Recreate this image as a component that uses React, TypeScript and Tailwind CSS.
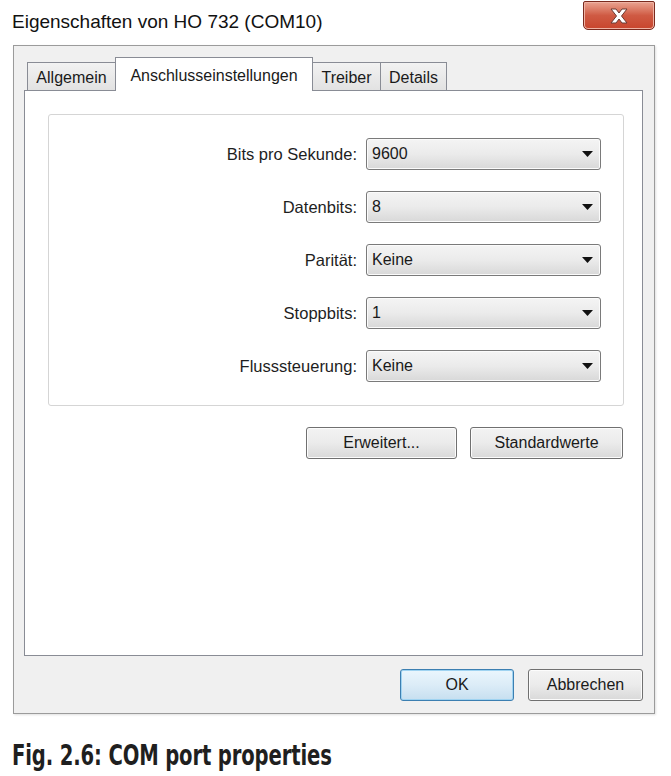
const rows = [
  { label: "Bits pro Sekunde:", value: "9600" },
  { label: "Datenbits:", value: "8" },
  { label: "Parität:", value: "Keine" },
  { label: "Stoppbits:", value: "1" },
  { label: "Flusssteuerung:", value: "Keine" },
];

const tabs = [
  { name: "Allgemein", width: "w-[89px]" },
  { name: "Anschlusseinstellungen", width: "w-[198px]", active: true },
  { name: "Treiber", width: "w-[69px]" },
  { name: "Details", width: "w-[67px]" },
];

function DropArrow() {
  return (
    <svg width="11" height="6" viewBox="0 0 11 6" className="shrink-0">
      <path d="M0 0 H11 L5.5 6 Z" fill="#111" />
    </svg>
  );
}

function Combo({ value }: { value: string }) {
  return (
    <div className="flex h-[32px] w-[235px] items-center justify-between rounded-[3px] border border-[#7a7a7a] bg-gradient-to-b from-[#f4f4f4] via-[#ebebeb] to-[#d8d8d8] pl-[5px] pr-[7px] shadow-[inset_0_0_0_1px_#fbfbfb]">
      <span className="text-[16px] text-[#1a1a1a]">{value}</span>
      <DropArrow />
    </div>
  );
}

function WinButton({ label, className, primary }: { label: string; className: string; primary?: boolean }) {
  return (
    <button
      className={
        primary
          ? `h-[32px] ${className} rounded-[3px] border border-[#3c7fb1] bg-gradient-to-b from-[#eaf6fd] via-[#dcecf7] to-[#c6dff0] text-[16px] text-[#1a1a1a] shadow-[inset_0_0_0_1px_#9fd3f1]`
          : `h-[32px] ${className} rounded-[3px] border border-[#707070] bg-gradient-to-b from-[#f3f3f3] via-[#ebebeb] to-[#d9d9d9] text-[16px] text-[#1a1a1a] shadow-[inset_0_0_0_1px_#fcfcfc]`
      }
    >
      {label}
    </button>
  );
}

export default function App() {
  return (
    <div className="h-[776px] w-[671px] bg-white font-['Liberation_Sans',Arial,sans-serif] text-[#1a1a1a]">
      {/* title bar */}
      <div className="flex h-[45px] items-start justify-between pl-[12px] pr-[16px]">
        <div className="pt-[10px] text-[19px] leading-[24px] text-[#111]">Eigenschaften von HO 732 (COM10)</div>
        <div className="mt-[1px] flex h-[29px] w-[72px] items-center justify-center rounded-b-[5px] rounded-t-[2px] border border-[#7a2a1e] bg-gradient-to-b from-[#e9a391] via-[#cf5a43] to-[#c8442c] shadow-[inset_0_0_0_1px_#efb3a4]">
          <svg width="20" height="16" viewBox="0 0 20 16">
            <path
              d="M2 1 H7 L10 5 L13 1 H18 L12.5 8 L18 15 H13 L10 11 L7 15 H2 L7.5 8 Z"
              fill="#fff"
              stroke="#6b3a33"
              strokeWidth="1"
              strokeLinejoin="round"
            />
          </svg>
        </div>
      </div>

      {/* dialog body */}
      <div className="ml-[13px] h-[669px] w-[642px] border border-[#9b9b9b] bg-[#f0f0f0] pl-[10px] pt-[11px] shadow-[1px_1px_2px_rgba(0,0,0,0.12)]">
        <div className="flex items-end pl-[3px]">
          {tabs.map((t, i) =>
            t.active ? (
              <div
                key={t.name}
                className={`relative z-10 -mb-px -ml-px flex h-[34px] ${t.width} items-start justify-center border border-b-0 border-[#898c95] bg-white pt-[6px] text-[16px]`}
              >
                {t.name}
              </div>
            ) : (
              <div
                key={t.name}
                className={`flex h-[28px] ${t.width} ${i > 0 ? "-ml-px" : ""} items-center justify-center border border-b-0 border-[#898c95] bg-gradient-to-b from-[#f2f2f2] to-[#e2e2e2] pt-[2px] text-[16px]`}
              >
                {t.name}
              </div>
            )
          )}
        </div>

        <div className="h-[566px] w-[619px] border border-[#898c95] bg-white pl-[23px] pt-[23px]">
          <div className="w-[576px] rounded-[3px] border border-[#d5d5d5] pb-[23px] pr-[22px] pt-[23px]">
            <div className="flex flex-col gap-[21px]">
              {rows.map((r) => (
                <div key={r.label} className="flex items-center justify-end gap-[9px]">
                  <span className="text-[16.5px] text-[#1e1e1e]">{r.label}</span>
                  <Combo value={r.value} />
                </div>
              ))}
            </div>
          </div>
          <div className="mt-[21px] flex w-[576px] justify-end gap-[13px] pr-[1px]">
            <WinButton label="Erweitert..." className="w-[151px]" />
            <WinButton label="Standardwerte" className="w-[153px]" />
          </div>
        </div>

        <div className="mt-[13px] flex w-[619px] justify-end gap-[14px]">
          <WinButton label="OK" className="w-[114px]" primary />
          <WinButton label="Abbrechen" className="w-[115px]" />
        </div>
      </div>

      {/* caption */}
      <div className="pl-[12px] pt-[26px]">
        <div className="origin-left scale-x-[0.7] whitespace-nowrap font-['DejaVu_Sans',sans-serif] text-[28px] font-bold leading-[32px] tracking-[-0.2px] text-[#1f1f1f]">
          Fig. 2.6: COM port properties
        </div>
      </div>
    </div>
  );
}
